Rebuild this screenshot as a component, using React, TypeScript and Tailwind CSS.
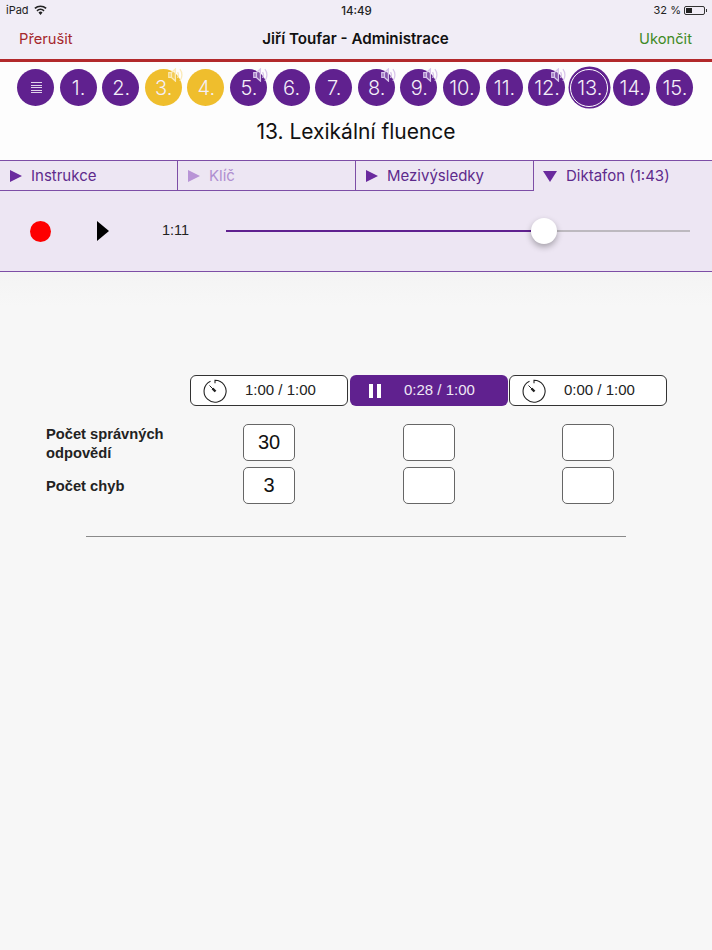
const steps = [
  { label: "≡", menu: true },
  { label: "1." },
  { label: "2." },
  { label: "3.", yellow: true, sound: true },
  { label: "4.", yellow: true },
  { label: "5.", sound: true },
  { label: "6." },
  { label: "7." },
  { label: "8.", sound: true },
  { label: "9.", sound: true },
  { label: "10." },
  { label: "11." },
  { label: "12.", sound: true },
  { label: "13.", current: true },
  { label: "14." },
  { label: "15." },
];

function SpeakerBadge({ color }: { color: string }) {
  return (
    <svg
      viewBox="0 0 16 14"
      className="absolute top-[-1px] right-[-2px] h-[14px] w-[16px]"
      fill="none"
      stroke={color}
      strokeWidth="1.3"
    >
      <path d="M.8 4.6h2.6v4.8H.8z" fill={color} fillOpacity="0.3" />
      <path d="M3.4 4.6 7.4 1v12l-4-3.6z" fill={color} fillOpacity="0.3" />
      <path d="M9.6 4c1.1 1.8 1.1 4.2 0 6" />
      <path d="M11.9 1.2c2.7 3.4 2.7 8.2 0 11.6" />
    </svg>
  );
}

function StepCircle({ step }: { step: (typeof steps)[number] }) {
  return (
    <div
      className={`relative flex h-[37px] w-[37px] items-center justify-center rounded-full pl-[1px] font-['Inter',sans-serif] text-[20px] font-light text-[#f4eff8] ${
        step.yellow ? "bg-[#efbe2d]" : "bg-[#60218f]"
      } ${step.current ? "shadow-[0_0_0_2.5px_#60218f]" : ""}`}
    >
      {step.menu ? (
        <div className="flex w-[11px] flex-col gap-[1.5px]">
          <div className="h-px bg-white/80" />
          <div className="h-px bg-white/80" />
          <div className="h-px bg-white/80" />
          <div className="h-px bg-white/80" />
          <div className="h-px bg-white/80" />
        </div>
      ) : (
        step.label
      )}
      {step.current && (
        <div className="absolute inset-[-0.5px] rounded-full border-[1.5px] border-white" />
      )}
      {step.sound && <SpeakerBadge color={step.yellow ? "#fbeab8" : "#d8c6ea"} />}
    </div>
  );
}

function Tab({
  label,
  open,
  disabled,
  last,
}: {
  label: string;
  open?: boolean;
  disabled?: boolean;
  last?: boolean;
}) {
  return (
    <div
      className={`flex h-[30px] items-center font-['Inter',sans-serif] text-[15px] ${
        disabled ? "text-[#b08fd0]" : "text-[#5e2a8c]"
      } ${open ? "gap-[9px] pl-[9px]" : "gap-[9px] border-b border-[#7d4ea6] pt-[1px] pl-[10px]"} ${last ? "" : "border-r border-[#7d4ea6]"}`}
    >
      {open ? (
        <div className="h-0 w-0 border-x-[7px] border-t-[11px] border-x-transparent border-t-[#6a2a9e]" />
      ) : (
        <div
          className={`h-0 w-0 border-y-[6px] border-l-[12px] border-y-transparent ${
            disabled ? "border-l-[#b894d6]" : "border-l-[#6a2a9e]"
          }`}
        />
      )}
      <span>{label}</span>
    </div>
  );
}

function TimerIcon() {
  return (
    <svg viewBox="0 0 26 26" className="h-[26px] w-[26px]" fill="none" stroke="#222" strokeWidth="1.1">
      <path d="M8.5 3.2a11 11 0 1 0 4.5-1v3" />
      <path d="M7.5 7.5 13 13" strokeWidth="1" />
      <path d="M10.5 10.5 13.5 13.5" strokeWidth="2.4" />
    </svg>
  );
}

function TimerButton({ time }: { time: string }) {
  return (
    <div className="flex h-[31px] w-[158px] items-center rounded-[6px] border border-[#333] bg-white pl-[11px] text-[#222]">
      <TimerIcon />
      <span className="ml-[17px] font-['Liberation_Sans',sans-serif] text-[15px]">{time}</span>
    </div>
  );
}

function ScoreBox({ value }: { value?: string }) {
  return (
    <div className="flex h-[37px] w-[52px] items-center justify-center rounded-[5px] border border-[#666] bg-white pb-[2px] font-['Liberation_Sans',sans-serif] text-[20px] text-[#111]">
      {value}
    </div>
  );
}

export default function App() {
  return (
    <div className="min-h-[950px] w-[712px] overflow-hidden bg-[#f7f7f7]">
      <header className="h-[62px] border-b-[3px] border-[#b2292b] bg-[#f1edf6]">
        <div className="flex h-[20px] items-center justify-between pr-[5px] pl-[6px] font-['Inter',sans-serif] text-[11px] leading-[14px] text-[#222]">
          <div className="flex w-[200px] items-center gap-[5px]">
            <span>iPad</span>
            <svg viewBox="0 0 16 12" className="h-[10px] w-[13px]" fill="#222">
              <path d="M8 12 5.5 9a3.6 3.6 0 0 1 5 0zM4.3 7.7 3 6.2a7.4 7.4 0 0 1 10 0l-1.3 1.5a5.4 5.4 0 0 0-7.4 0zM1.8 4.8.4 3.3a11.3 11.3 0 0 1 15.2 0l-1.4 1.5a9.2 9.2 0 0 0-12.4 0z" />
            </svg>
          </div>
          <span className="pt-[1px] text-[11.5px] font-medium">14:49</span>
          <div className="flex w-[200px] items-center justify-end gap-[3px]">
            <span>32 %</span>
            <div className="flex h-[9px] w-[21px] rounded-[2px] border border-[#333] p-px">
              <div className="w-[6px] bg-[#222]" />
            </div>
            <div className="ml-[-2px] h-[3px] w-px bg-[#333]" />
          </div>
        </div>
        <div className="flex h-[39px] items-center justify-between pr-[20px] pl-[19px] font-['Inter',sans-serif]">
          <span className="w-[120px] text-[14.7px] text-[#a5282c]">Přerušit</span>
          <span className="text-[15.2px] font-semibold text-[#111]">Jiří Toufar - Administrace</span>
          <span className="w-[120px] text-right text-[14.7px] text-[#3f8a25]">Ukončit</span>
        </div>
      </header>

      <section className="h-[98px] bg-[#fdfdfd]">
        <div className="flex justify-between pt-[7px] pr-[19px] pl-[17px]">
          {steps.map((step) => (
            <StepCircle key={step.label} step={step} />
          ))}
        </div>
        <h1 className="mt-[11px] text-center font-['Inter',sans-serif] text-[21px] leading-[30px] font-normal text-[#111]">
          13. Lexikální fluence
        </h1>
      </section>

      <section className="h-[112px] border-y border-[#7d4ea6] bg-[#ede6f3]">
        <div className="grid grid-cols-4">
          <Tab label="Instrukce" />
          <Tab label="Klíč" disabled />
          <Tab label="Mezivýsledky" />
          <Tab label="Diktafon (1:43)" open last />
        </div>
        <div className="flex h-[80px] items-center">
          <div className="ml-[30px] h-[21px] w-[21px] rounded-full bg-[#fe0000]" />
          <div className="ml-[46px] h-0 w-0 border-y-[10.5px] border-l-[12px] border-y-transparent border-l-black" />
          <span className="ml-[53px] w-[64px] font-['Liberation_Sans',sans-serif] text-[14.5px] text-[#222]">1:11</span>
          <div className="flex items-center">
            <div className="h-[2px] w-[305px] bg-[#60218f]" />
            <div className="z-10 h-[26px] w-[26px] rounded-full bg-white shadow-[0_3px_6px_rgba(0,0,0,0.3)]" />
            <div className="h-[1.5px] w-[133px] bg-[#bdb9bf]" />
          </div>
        </div>
      </section>

      <section className="h-[34px] bg-gradient-to-b from-[#f4f4f4] to-[#f7f7f7]" />

      <main className="pt-[69px]">
        <div className="flex gap-[1.5px] pl-[190px]">
          <TimerButton time="1:00 / 1:00" />
          <div className="flex h-[31px] w-[158px] items-center rounded-[6px] bg-[#60218f] pl-[19.5px] text-[#efe8f5]">
            <div className="flex gap-[4px]">
              <div className="h-[14px] w-[4px] bg-white" />
              <div className="h-[14px] w-[4px] bg-white" />
            </div>
            <span className="ml-[23px] font-['Liberation_Sans',sans-serif] text-[15px]">0:28 / 1:00</span>
          </div>
          <TimerButton time="0:00 / 1:00" />
        </div>

        <div className="mt-[18px] flex h-[37px] pl-[46px] font-['Liberation_Sans',sans-serif]">
          <div className="w-[197px] pt-[1px] text-[14.7px] leading-[19px] font-bold text-[#222]">
            <div>Počet správných</div>
            <div>odpovědí</div>
          </div>
          <ScoreBox value="30" />
          <div className="ml-[108px]">
            <ScoreBox />
          </div>
          <div className="ml-[107px]">
            <ScoreBox />
          </div>
        </div>
        <div className="mt-[6px] flex h-[37px] pl-[46px] font-['Liberation_Sans',sans-serif]">
          <div className="w-[197px] pt-[10px] text-[14.7px] leading-[19px] font-bold text-[#222]">Počet chyb</div>
          <ScoreBox value="3" />
          <div className="ml-[108px]">
            <ScoreBox />
          </div>
          <div className="ml-[107px]">
            <ScoreBox />
          </div>
        </div>

        <div className="mt-[32px] ml-[86px] h-px w-[540px] bg-[#8a8a8a]" />
      </main>
    </div>
  );
}
